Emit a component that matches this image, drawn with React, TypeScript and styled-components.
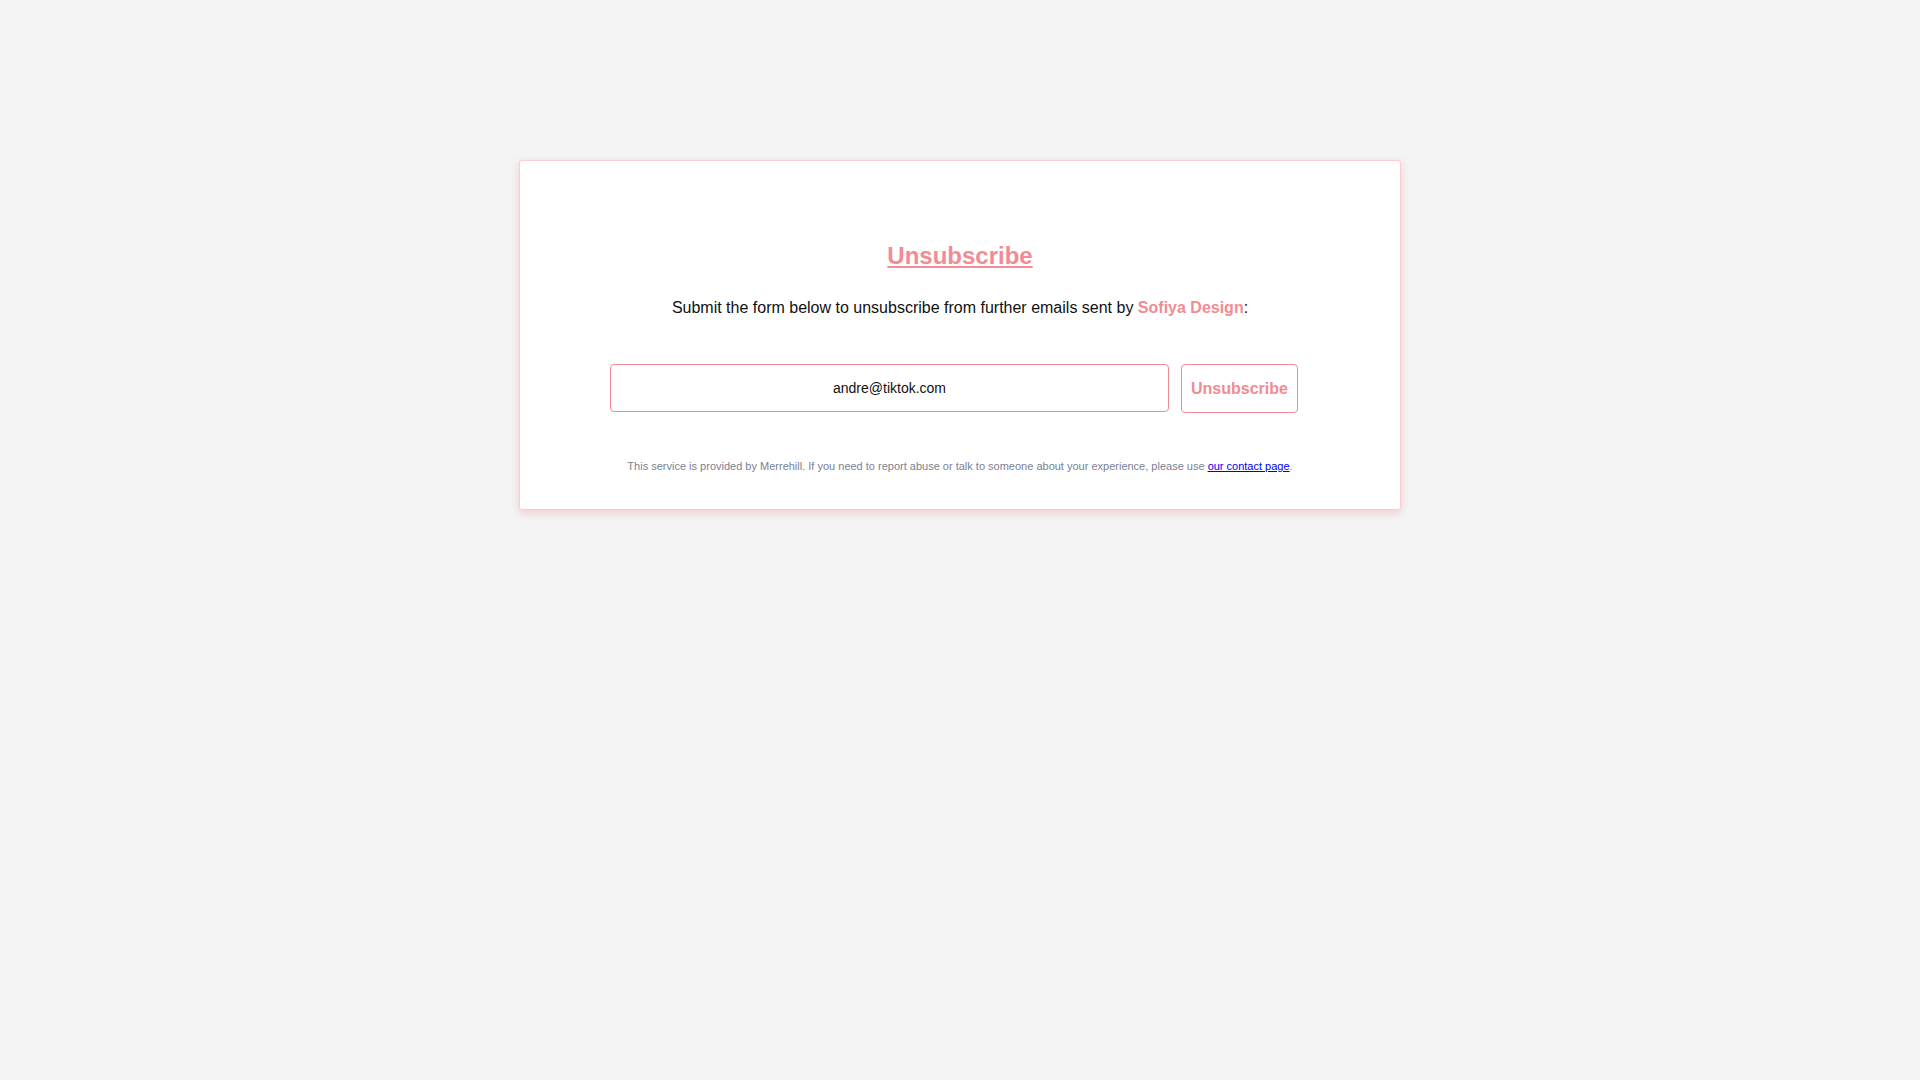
import React from 'react';
import styled, { createGlobalStyle } from 'styled-components';

const pink = '#f28b94';

const GlobalStyle = createGlobalStyle`
    html, body {
        margin: 0;
        padding: 0;
        background: #f4f4f4;
        font-family: "Liberation Sans", Arial, sans-serif;
    }
`;

const Page = styled.div`
    min-height: 100vh;
    padding-top: 160px;
    box-sizing: border-box;
`;

const Card = styled.div`
    width: 882px;
    margin: 0 auto;
    box-sizing: border-box;
    background: #fff;
    border: 1px solid #f9cdd1;
    border-radius: 3px;
    box-shadow: 0 3px 8px rgba(242, 139, 148, 0.4);
    padding: 81px 20px 36px;
    display: flex;
    flex-direction: column;
    align-items: center;
`;

const Title = styled.a`
    font-size: 24px;
    font-weight: bold;
    line-height: 28px;
    color: ${pink};
    text-decoration: underline;
    text-underline-offset: 2px;
`;

const Lead = styled.p`
    margin: 29px 0 0;
    font-size: 16px;
    line-height: 18px;
    color: #111;
`;

const Sender = styled.strong`
    color: ${pink};
`;

const Form = styled.form`
    width: 700px;
    margin-top: 47px;
    display: flex;
    align-items: flex-start;
    gap: 12px;
`;

const EmailInput = styled.input`
    width: 559px;
    height: 48px;
    box-sizing: border-box;
    border: 1px solid ${pink};
    border-radius: 4px;
    background: #fff;
    text-align: center;
    font-family: inherit;
    font-size: 14px;
    color: #111;
    outline: none;
`;

const SubmitButton = styled.button`
    width: 117px;
    height: 49px;
    box-sizing: border-box;
    border: 1px solid ${pink};
    border-radius: 4px;
    background: #fff;
    color: ${pink};
    font-family: inherit;
    font-size: 16px;
    font-weight: bold;
    padding: 0;
    cursor: pointer;
`;

const Footnote = styled.p`
    margin: 47px 0 0;
    font-size: 11px;
    line-height: 13px;
    color: #7b8190;

    a {
        color: #0000ee;
        text-decoration: underline;
    }
`;

const App: React.FC = () => (
    <Page>
        <GlobalStyle />
        <Card>
            <Title href="#">Unsubscribe</Title>
            <Lead>
                Submit the form below to unsubscribe from further emails sent by <Sender>Sofiya Design</Sender>:
            </Lead>
            <Form onSubmit={(e) => e.preventDefault()}>
                <EmailInput type="email" defaultValue="andre@tiktok.com" />
                <SubmitButton type="submit">Unsubscribe</SubmitButton>
            </Form>
            <Footnote>
                This service is provided by Merrehill. If you need to report abuse or talk to someone about your
                experience, please use <a href="#">our contact page</a>.
            </Footnote>
        </Card>
    </Page>
);

export default App;
